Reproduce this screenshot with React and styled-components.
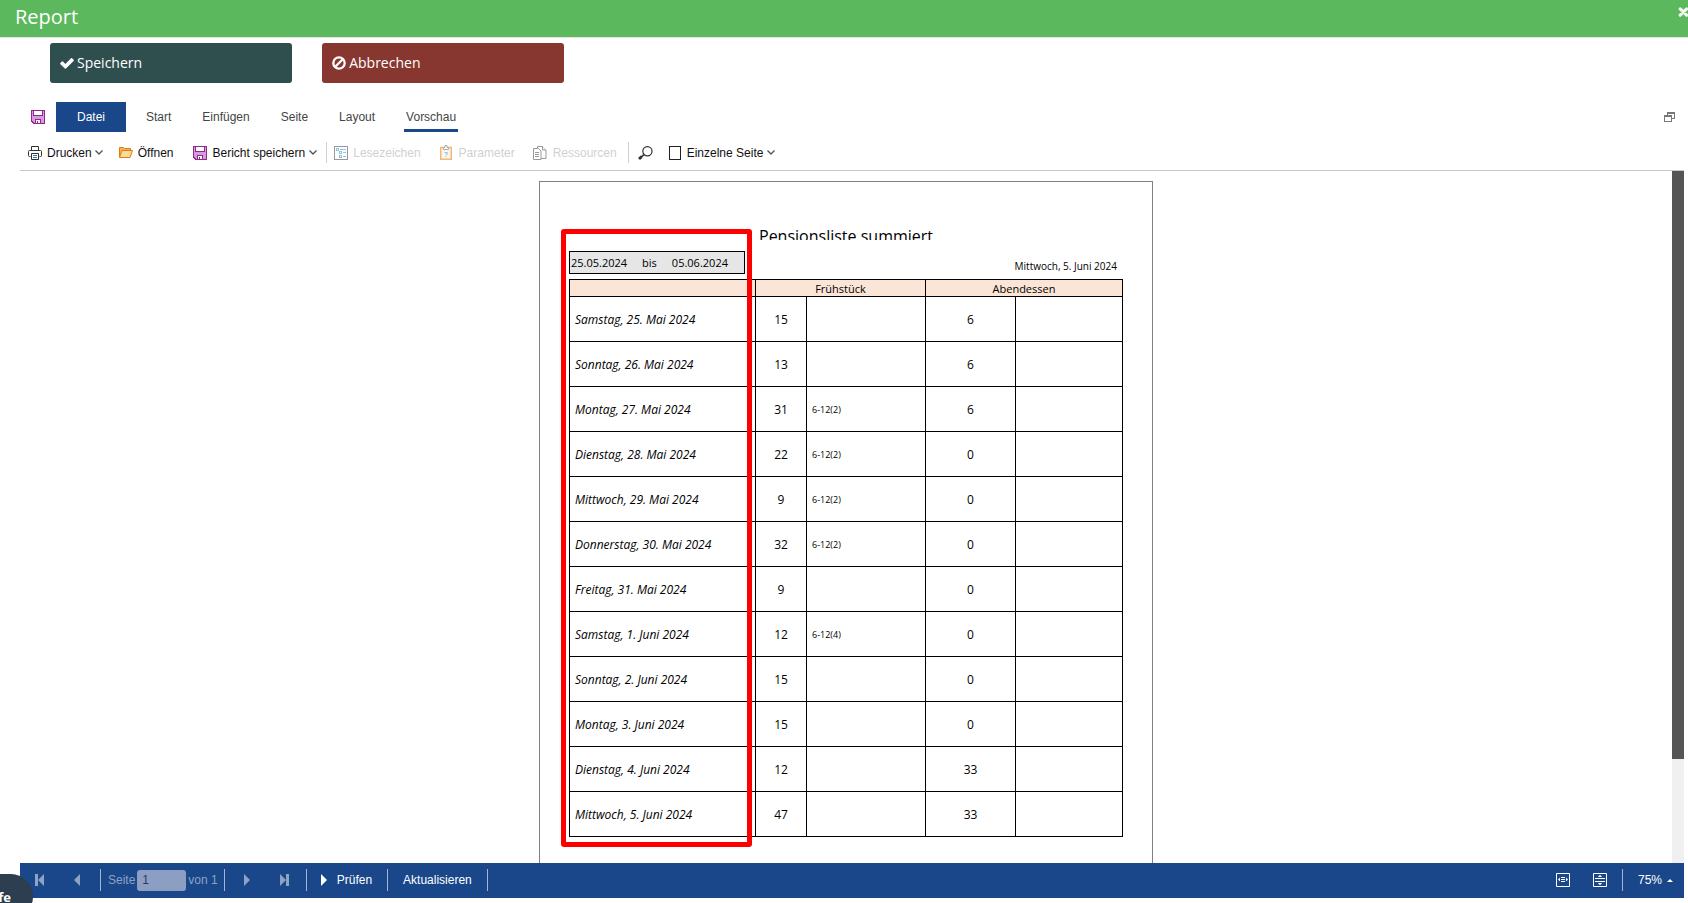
import React from "react";
import styled, { createGlobalStyle } from "styled-components";

const navy = "#19478a";
const faded = "#8ea2c4";

const GlobalStyle = createGlobalStyle`
  * { box-sizing: border-box; }
  html, body, #root { height: 100%; }
  body {
    margin: 0;
    background: #fff;
    font-family: "Liberation Sans", Arial, sans-serif;
    font-size: 12px;
    overflow: hidden;
  }
  button { font: inherit; border: 0; background: none; padding: 0; color: inherit; }
  svg { display: block; flex: none; }
`;

const Screen = styled.div`
  display: flex;
  flex-direction: column;
  height: 100vh;
  padding-bottom: 5px;
`;

const TitleBar = styled.header`
  display: flex;
  justify-content: space-between;
  flex: none;
  height: 38px;
  padding-left: 15px;
  background: #5cb85c;
  border-bottom: 1px solid #e5e5e5;
  color: #fff;
  overflow: hidden;
`;

const Title = styled.h1`
  margin: 0;
  font: 400 20px/34px "Open Sans", sans-serif;
`;

const CloseButton = styled.button`
  align-self: flex-start;
  margin: 7px -1px 0 0;
  opacity: 0.9;
`;

const ActionRow = styled.div`
  display: grid;
  grid-template-columns: repeat(6, 1fr);
  flex: none;
  padding: 5px 20px 0 35px;
`;

const ActionButton = styled.button`
  display: flex;
  align-items: center;
  gap: 3px;
  height: 40px;
  margin: 0 15px;
  padding: 0 10px;
  border-radius: 3px;
  && {
    background: ${(p) => p.$color};
    color: #fff;
    font: 400 14px/20px "Open Sans", sans-serif;
  }
`;

const Designer = styled.main`
  display: flex;
  flex-direction: column;
  flex: 1;
  min-height: 0;
  margin: 19px 4px 0 20px;
`;

const TabRow = styled.nav`
  display: flex;
  align-items: center;
  flex: none;
  height: 30px;
  padding-right: 9px;
`;

const QuickSave = styled.button`
  margin: 0 11px;
`;

const FileTab = styled.button`
  width: 70px;
  height: 30px;
  && { background: ${navy}; color: #fff; }
`;

const Tabs = styled.div`
  display: flex;
  flex: 1;
  gap: 27px;
  margin-left: 18px;
`;

const Tab = styled.button`
  height: 30px;
  && { padding: 0 2px; color: #444; }
  border-block: 3px solid transparent;
  border-bottom-color: ${(p) => (p.$active ? navy : "transparent")};
`;

const Toolbar = styled.div`
  display: flex;
  align-items: center;
  flex: none;
  height: 39px;
  padding: 3px 0 0 8px;
  border-bottom: 1px solid #c6c6c6;
`;

const Tool = styled.button`
  display: flex;
  align-items: center;
  gap: ${(p) => p.$gap || 5}px;
  margin-right: ${(p) => p.$after || 16}px;
  white-space: nowrap;
  && { color: ${(p) => (p.disabled ? "#d0d0d4" : "#111")}; }
`;

const ToolDivider = styled.span`
  width: 1px;
  height: 21px;
  margin-right: ${(p) => p.$after}px;
  background: #d0d0d0;
`;

const Viewer = styled.div`
  display: flex;
  flex: 1;
  min-height: 0;
`;

const Canvas = styled.div`
  flex: 1;
  overflow: hidden;
  padding-top: 10px;
`;

const Scrollbar = styled.div`
  width: 12px;
  background: #f0f0f0;
`;

const Thumb = styled.div`
  height: 85%;
  background: #555;
`;

const Paper = styled.article`
  position: relative;
  width: 614px;
  height: 868px;
  margin: 0 auto;
  padding: 43px 29px 0;
  border: 1px solid #808080;
  font-family: "Open Sans", "Noto Sans", sans-serif;
  color: #000;
`;

const ReportTitle = styled.h2`
  height: 15px;
  margin: 0 0 0 190px;
  overflow: hidden;
  font-size: 16px;
  font-weight: 400;
  line-height: 22px;
`;

const ReportMeta = styled.div`
  display: flex;
  justify-content: space-between;
  align-items: flex-start;
  height: 39px;
  padding-top: 11px;
`;

const Period = styled.div`
  display: flex;
  gap: 15px;
  width: 176px;
  height: 23px;
  padding-left: 1px;
  border: 1px solid #000;
  background: #e6e6e6;
  font-size: 11px;
  line-height: 21px;
`;

const PrintDate = styled.time`
  padding: 7px 6px 0 0;
  font-size: 10px;
  line-height: 16px;
`;

const Highlight = styled.div`
  position: absolute;
  top: 47px;
  left: 21px;
  width: 191px;
  height: 618px;
  border: 5px solid #f00;
  border-radius: 3px;
`;

const ReportTable = styled.table`
  width: 554px;
  border-collapse: collapse;
  table-layout: fixed;
  th, td { border: 1px solid #000; padding: 0; }
  th {
    height: 17px;
    background: #fbe5d6;
    font-size: 11px;
    font-weight: 400;
    line-height: 15px;
  }
  td { height: 45px; }
`;

const DayCell = styled.td`
  && { padding-left: 5px; }
  font-size: 12px;
  font-style: italic;
`;

const CountCell = styled.td`
  text-align: center;
  font-size: 12px;
`;

const NoteCell = styled.td`
  && { padding-left: 5px; }
  font-size: 9px;
`;

const StatusBar = styled.footer`
  display: flex;
  align-items: center;
  flex: none;
  height: 35px;
  padding: 0 11px 1px 15px;
  background: ${navy};
  color: #fff;
`;

const BarButton = styled.button`
  display: flex;
  align-items: center;
  gap: ${(p) => p.$gap || 10}px;
  margin-right: ${(p) => p.$after}px;
  && { color: ${(p) => (p.disabled ? faded : "#fff")}; }
`;

const BarDivider = styled.span`
  width: 1px;
  height: 22px;
  margin-right: ${(p) => p.$after}px;
  background: #a3b5d0;
`;

const PageField = styled.label`
  display: flex;
  align-items: center;
  gap: 2px;
  margin-right: 6px;
  color: ${faded};
`;

const PageInput = styled.input`
  width: 49px;
  height: 21px;
  padding: 0 5px;
  border: 0;
  border-radius: 3px;
  background: #8c9fc3;
  color: #1f3a6b;
  font: inherit;
`;

const Spacer = styled.span`
  flex: 1;
`;

const HelpButton = styled.button`
  position: fixed;
  left: -40px;
  bottom: -16px;
  width: 73px;
  height: 45px;
  border-radius: 22px;
  && {
    padding-right: 22px;
    background: #2c3e50;
    color: #fff;
    font: 700 13px/16px "Open Sans", sans-serif;
    text-align: right;
  }
`;

const CheckIcon = () => (
  <svg width="14" height="14" viewBox="0 0 14 14">
    <path d="M1.900 5.600a.8.8 0 0 1 1.100 0L5.400 8 11 2.300a.8.8 0 0 1 1.100 0l1.500 1.500a.8.8 0 0 1 0 1.100L6 12.400a.8.8 0 0 1-1.100 0L.4 8.200a.8.8 0 0 1 0-1.100z" fill="#fff" />
  </svg>
);

const BanIcon = () => (
  <svg width="14" height="14" viewBox="0 0 14 14" fill="none" stroke="#fff" strokeWidth="2.300">
    <circle cx="7" cy="7" r="5.700" />
    <path d="M3 11 11 3" />
  </svg>
);

const CloseIcon = () => (
  <svg width="11" height="10" viewBox="0 0 11 10" fill="none" stroke="#fff" strokeWidth="3.200" strokeLinecap="round">
    <path d="M2.200 1.900 8.600 8.200M8.600 1.900 2.200 8.200" />
  </svg>
);

const SaveIcon = () => (
  <svg width="14" height="14" viewBox="0 0 14 14" shapeRendering="crispEdges">
    <path d="M0 0h14v14H2l-2-2z" fill="#92278f" />
    <path d="M1 1h12v12H3l-2-2z" fill="#d59bdc" />
    <path d="M2 0h10v6H2z" fill="#92278f" />
    <path d="M3 1h8v4H3z" fill="#fff" />
    <path d="M4 9h6v5H4z" fill="#92278f" />
    <path d="M5 10h4v3H7v-2H6v2H5z" fill="#fff" />
  </svg>
);

const PrintIcon = () => (
  <svg width="14" height="14" viewBox="0 0 14 14" fill="none" stroke="#333">
    <path d="M3.500 4V.5h7V4M2.500 10.500h-1a1 1 0 0 1-1-1v-4a1 1 0 0 1 1-1h11a1 1 0 0 1 1 1v4a1 1 0 0 1-1 1h-1" />
    <path d="M3.500 7.500h7v6h-7z" fill="#fff" />
    <path d="M5 9.500h4M5 11.500h4" stroke="#1e7fc0" />
  </svg>
);

const FolderIcon = () => (
  <svg width="14" height="11" viewBox="0 0 14 11" stroke="#dc7a14" strokeLinejoin="round">
    <path d="M.5 10V.5h4l1 1h6V4" fill="#f5b556" />
    <path d="M.5 10.500 3 3.500h10.500l-2.500 7z" fill="#fbdc97" />
  </svg>
);

const ChevronShape = styled.svg`
  margin-left: -2px;
`;

const Chevron = () => (
  <ChevronShape width="8" height="5" viewBox="0 0 8 5" fill="none" stroke="#555" strokeWidth="1.400">
    <path d="M.5.500 4 4 7.500.5" />
  </ChevronShape>
);

const BookmarkIcon = () => (
  <svg width="14" height="14" viewBox="0 0 14 14" fill="none" shapeRendering="crispEdges">
    <path d="M.5.500h13v13H.5z" stroke="#999" />
    <path d="M2.500 2.500h2v2h-2zM5.500 5.500h2v2h-2zM5.500 9.500h2v2h-2zM6 3.500h6M9 6.500h3M9 10.500h3" stroke="#8fc3e6" />
  </svg>
);

const ParameterIcon = () => (
  <svg width="12" height="15" viewBox="0 0 12 15" fill="none">
    <path d="M.75 2.500h10.500v11.700H.75z" fill="#fdf6ec" stroke="#efb97c" strokeWidth="1.500" />
    <path d="M3.500 4.500v-2h1.500v-2h2v2h1.500v2z" fill="#fff" stroke="#aaa" />
    <path d="M4.500 7.500h2.500v1.500L5.800 10.200M5.800 11.200v1" stroke="#8fc3e6" strokeWidth="1.200" />
  </svg>
);

const ResourceIcon = () => (
  <svg width="14" height="14" viewBox="0 0 14 14" fill="#fff" stroke="#999">
    <path d="M4.500.5h5l3.500 3.500v8.500H4.500z" />
    <path d="M9.500.5V4H13" />
    <path d="M.5 2.500h5L8 5v8.500H.5z" />
    <path d="M2 6.500h4M2 8.500h4M2 10.500h4" />
  </svg>
);

const SearchIcon = () => (
  <svg width="15" height="14" viewBox="0 0 15 14" fill="none" stroke="#333">
    <circle cx="9.400" cy="5.200" r="4.600" strokeWidth="1.200" />
    <path d="M6 8.600 3 11.200" strokeWidth="1.600" />
    <path d="M3.600 10.600 1 13" strokeWidth="2.800" />
  </svg>
);

const SinglePageIcon = () => (
  <svg width="12" height="14" viewBox="0 0 12 14" fill="none" stroke="#222" shapeRendering="crispEdges">
    <path d="M.5.500h11v13H.5z" />
  </svg>
);

const RestoreIcon = () => (
  <svg width="11" height="10" viewBox="0 0 11 10" shapeRendering="crispEdges">
    <path d="M3 0h8v7H8V6h2V2H4v1H3zM0 3h8v7H0zM1 5v4h6V5z" fill="#777" fillRule="evenodd" />
  </svg>
);

const NavIcon = ({ bar, flip }) => (
  <svg width={bar ? 9 : 6} height="12" viewBox={bar ? "0 0 9 12" : "0 0 6 12"} fill="currentColor">
    <g transform={flip ? (bar ? "rotate(180 4.500 6)" : "rotate(180 3 6)") : undefined}>
      <path d="M0 0 6 6 0 12z" />
      {bar && <path d="M6 0h3v12H6z" />}
    </g>
  </svg>
);

const FitWidthIcon = () => (
  <svg width="14" height="14" viewBox="0 0 14 14" fill="none" stroke="#fff">
    <path d="M.5.500h13v13H.5zM5 4.500h4M5 6.500h4M5 8.500h4" />
    <path d="M2 6.500 4 4.500v4zM12 6.500 10 4.500v4z" fill="#fff" stroke="none" />
  </svg>
);

const FitPageIcon = () => (
  <svg width="14" height="14" viewBox="0 0 14 14" fill="none" stroke="#fff">
    <path d="M.5.500h13v13H.5zM2 5.500h10M2 8.500h10" />
    <path d="M7 1.800 9.200 4H4.800zM7 12.200 9.200 10H4.800z" fill="#fff" stroke="none" />
  </svg>
);

const CaretUp = () => (
  <svg width="6" height="3" viewBox="0 0 6 3" fill="#fff">
    <path d="M0 3 3 0l3 3z" />
  </svg>
);

const days = [
  ["Samstag, 25. Mai 2024", 15, "", 6],
  ["Sonntag, 26. Mai 2024", 13, "", 6],
  ["Montag, 27. Mai 2024", 31, "6-12(2)", 6],
  ["Dienstag, 28. Mai 2024", 22, "6-12(2)", 0],
  ["Mittwoch, 29. Mai 2024", 9, "6-12(2)", 0],
  ["Donnerstag, 30. Mai 2024", 32, "6-12(2)", 0],
  ["Freitag, 31. Mai 2024", 9, "", 0],
  ["Samstag, 1. Juni 2024", 12, "6-12(4)", 0],
  ["Sonntag, 2. Juni 2024", 15, "", 0],
  ["Montag, 3. Juni 2024", 15, "", 0],
  ["Dienstag, 4. Juni 2024", 12, "", 33],
  ["Mittwoch, 5. Juni 2024", 47, "", 33],
];

const columnWidths = [186, 51, 119, 90, 107];
const tabs = ["Start", "Einfügen", "Seite", "Layout", "Vorschau"];

export default function App() {
  return (
    <Screen>
      <GlobalStyle />
      <TitleBar>
        <Title>Report</Title>
        <CloseButton aria-label="Schließen"><CloseIcon /></CloseButton>
      </TitleBar>
      <ActionRow>
        <ActionButton $color="#2f4f4f"><CheckIcon />Speichern</ActionButton>
        <ActionButton $color="#87372f"><BanIcon />Abbrechen</ActionButton>
      </ActionRow>
      <Designer>
        <TabRow>
          <QuickSave aria-label="Speichern"><SaveIcon /></QuickSave>
          <FileTab>Datei</FileTab>
          <Tabs>
            {tabs.map((t) => <Tab key={t} $active={t === "Vorschau"}>{t}</Tab>)}
          </Tabs>
          <button aria-label="Fenster"><RestoreIcon /></button>
        </TabRow>
        <Toolbar>
          <Tool><PrintIcon />Drucken<Chevron /></Tool>
          <Tool $after={19}><FolderIcon />Öffnen</Tool>
          <Tool $gap={6} $after={9}><SaveIcon />Bericht speichern<Chevron /></Tool>
          <ToolDivider $after={7} />
          <Tool disabled $after={19}><BookmarkIcon />Lesezeichen</Tool>
          <Tool disabled $gap={7} $after={18}><ParameterIcon />Parameter</Tool>
          <Tool disabled $gap={6} $after={11}><ResourceIcon />Ressourcen</Tool>
          <ToolDivider $after={9} />
          <Tool aria-label="Suchen"><SearchIcon /></Tool>
          <Tool $gap={6}><SinglePageIcon />Einzelne Seite<Chevron /></Tool>
        </Toolbar>
        <Viewer>
          <Canvas>
            <Paper>
              <ReportTitle>Pensionsliste summiert</ReportTitle>
              <ReportMeta>
                <Period><span>25.05.2024</span><span>bis</span><span>05.06.2024</span></Period>
                <PrintDate>Mittwoch, 5. Juni 2024</PrintDate>
              </ReportMeta>
              <ReportTable>
                <colgroup>
                  {columnWidths.map((w) => <col key={w} width={w} />)}
                </colgroup>
                <thead>
                  <tr><th /><th colSpan={2}>Frühstück</th><th colSpan={2}>Abendessen</th></tr>
                </thead>
                <tbody>
                  {days.map(([day, breakfast, note, dinner]) => (
                    <tr key={day}>
                      <DayCell>{day}</DayCell>
                      <CountCell>{breakfast}</CountCell>
                      <NoteCell>{note}</NoteCell>
                      <CountCell>{dinner}</CountCell>
                      <NoteCell />
                    </tr>
                  ))}
                </tbody>
              </ReportTable>
              <Highlight />
            </Paper>
          </Canvas>
          <Scrollbar><Thumb /></Scrollbar>
        </Viewer>
        <StatusBar>
          <BarButton disabled $after={30} aria-label="Erste Seite"><NavIcon bar flip /></BarButton>
          <BarButton disabled $after={20} aria-label="Vorherige Seite"><NavIcon flip /></BarButton>
          <BarDivider $after={7} />
          <PageField>Seite<PageInput defaultValue="1" />von 1</PageField>
          <BarDivider $after={19} />
          <BarButton disabled $after={30} aria-label="Nächste Seite"><NavIcon /></BarButton>
          <BarButton disabled $after={17} aria-label="Letzte Seite"><NavIcon bar /></BarButton>
          <BarDivider $after={14} />
          <BarButton $after={15}><NavIcon />Prüfen</BarButton>
          <BarDivider $after={15} />
          <BarButton $after={15}>Aktualisieren</BarButton>
          <BarDivider $after={0} />
          <Spacer />
          <BarButton $after={23} aria-label="Seitenbreite"><FitWidthIcon /></BarButton>
          <BarButton $after={15} aria-label="Ganze Seite"><FitPageIcon /></BarButton>
          <BarDivider $after={15} />
          <BarButton $gap={5} $after={0}>75%<CaretUp /></BarButton>
        </StatusBar>
      </Designer>
      <HelpButton>Hilfe</HelpButton>
    </Screen>
  );
}
